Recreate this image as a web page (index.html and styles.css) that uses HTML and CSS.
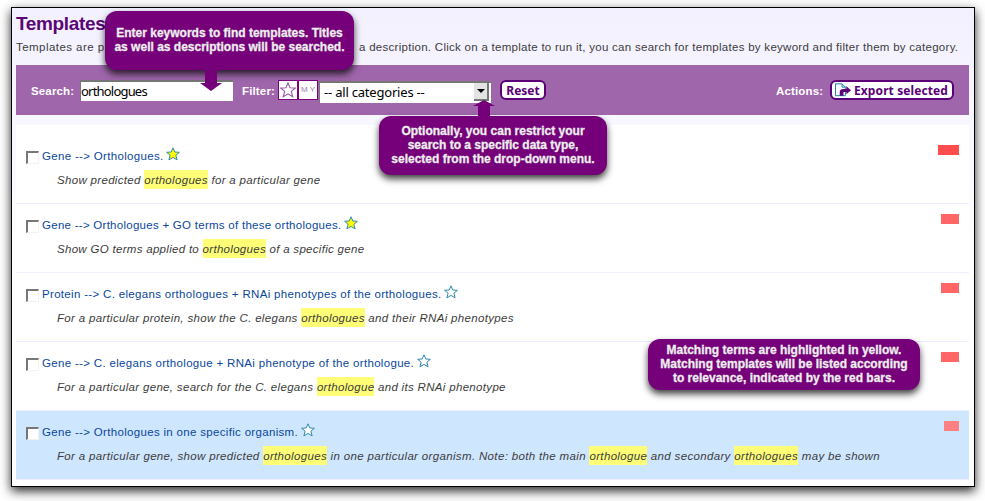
FILE: index.html
```
<!DOCTYPE html>
<html lang="en">
<head>
<meta charset="utf-8">
<title>Templates</title>
<link rel="stylesheet" href="styles.css">
</head>
<body>
<svg class="defs" width="0" height="0" aria-hidden="true">
  <symbol id="star" viewBox="0 0 14 14"><path d="M7 .8 8.8 5 13.4 5.3 9.9 8.2 11.1 12.9 7 10.4 2.9 12.9 4.1 8.2 .6 5.3 5.2 5Z"/></symbol>
</svg>
<main class="window">
  <h1>Templates</h1>
  <p class="intro"><span class="intro-start">Templates are p</span><span class="intro-end">a description. Click on a template to run it, you can search for templates by keyword and filter them by category.</span></p>

  <div class="toolbar">
    <label class="label-search" for="q">Search:</label>
    <input id="q" class="search" type="text" value="orthologues">
    <span class="label-filter">Filter:</span>
    <span class="toggle"><svg class="toggle-star"><use href="#star"/></svg></span><span class="toggle my">MY</span>
    <div class="select"><span>-- all categories --</span><span class="drop"><svg width="8" height="4"><path d="M0 0H8L4 4Z"/></svg></span></div>
    <button class="button reset">Reset</button>
    <span class="label-actions">Actions:</span>
    <button class="button export"><svg width="17" height="14" viewBox="0 0 18 14"><path class="page" d="M.5 .5H7.5L11 4V13H.5ZM7.5 .5V4H11"/><path class="arrow" d="M5 13V9.5Q5 6 9 6H12V3L17 7.3 12 11.5V9H9V13Z"/></svg><span>Export selected</span></button>
  </div>

  <section class="list">
    <article class="row">
      <div class="title"><i class="check"></i><a>Gene --&gt; Orthologues.</a><svg class="star on"><use href="#star"/></svg><b class="bar best"></b></div>
      <p>Show predicted <mark>orthologues</mark> for a particular gene</p>
    </article>
    <article class="row">
      <div class="title"><i class="check"></i><a>Gene --&gt; Orthologues + GO terms of these orthologues.</a><svg class="star on"><use href="#star"/></svg><b class="bar"></b></div>
      <p>Show GO terms applied to <mark>orthologues</mark> of a specific gene</p>
    </article>
    <article class="row">
      <div class="title"><i class="check"></i><a>Protein --&gt; C. elegans orthologues + RNAi phenotypes of the orthologues.</a><svg class="star"><use href="#star"/></svg><b class="bar"></b></div>
      <p>For a particular protein, show the C. elegans <mark>orthologues</mark> and their RNAi phenotypes</p>
    </article>
    <article class="row">
      <div class="title"><i class="check"></i><a>Gene --&gt; C. elegans orthologue + RNAi phenotype of the orthologue.</a><svg class="star"><use href="#star"/></svg><b class="bar"></b></div>
      <p>For a particular gene, search for the C. elegans <mark>orthologue</mark> and its RNAi phenotype</p>
    </article>
    <article class="row hover">
      <div class="title"><i class="check"></i><a>Gene --&gt; Orthologues in one specific organism.</a><svg class="star"><use href="#star"/></svg><b class="bar low"></b></div>
      <p>For a particular gene, show predicted <mark>orthologues</mark> in one particular organism. Note: both the main <mark>orthologue</mark> and secondary <mark>orthologues</mark> may be shown</p>
    </article>
  </section>
</main>

<aside class="tip tip-search">Enter keywords to find templates. Titles<br>as well as descriptions will be searched.<svg class="down" width="22" height="23"><path d="M5 0H17V14H22L11 22 0 14H5Z"/></svg></aside>
<aside class="tip tip-filter">Optionally, you can restrict your<br>search to a specific data type,<br>selected from the drop-down menu.<svg class="up" width="22" height="17"><path d="M5 17V6H0L11 0 22 6H17V17Z"/></svg></aside>
<aside class="tip tip-match">Matching terms are highlighted in yellow.<br>Matching templates will be listed according<br>to relevance, indicated by the red bars.</aside>
</body>
</html>
```
FILE: styles.css
```
* { box-sizing: border-box; }
body { margin: 0; width: 985px; height: 501px; overflow: hidden; background: #fff; position: relative; font: 11.5px/19px "Liberation Sans", Arial, sans-serif; color: #3c3c3c; }
.defs { position: absolute; }
.window { margin: 7px 0 0 11px; width: 964px; height: 480px; border: 1px solid #000; padding: 0 5px 0 4px; background: linear-gradient(#f3f0ff, #fff 250px); box-shadow: 0 4px 10px rgba(0,0,0,.85); display: flow-root; }
h1 { margin: 5px 0 0; font-size: 19px; line-height: 22px; letter-spacing: -.35px; color: #5b0577; white-space: nowrap; }
p { margin: 0; white-space: nowrap; }
.intro { display: flex; margin-top: 3px; height: 22px; letter-spacing: .28px; }
.intro-start { width: 343px; flex: none; letter-spacing: .45px; }
.toolbar { margin-top: 5px; height: 50px; background: #9f66ab; display: flex; align-items: flex-start; padding: 15px 15px 0 15px; color: #fff; font-weight: bold; letter-spacing: .15px; }
.toolbar > * { flex: none; }
.label-search { width: 49px; line-height: 22px; }
.search { width: 153px; height: 21px; border: 0; border-top: 2px solid #777; border-left: 1px solid #777; padding: 0 0 2px; font: 13px/17px "Noto Sans", sans-serif; color: #000; background: #fff; border-radius: 0; outline: 0; letter-spacing: -.8px; }
.label-filter { margin-left: 9px; width: 36px; line-height: 22px; }
.toggle { width: 20px; height: 20px; border: 1px solid #800080; background: #fff; display: grid; place-items: center; }
.toggle-star { width: 16px; height: 16px; fill: #fff; stroke: #9a5cad; stroke-width: 1; }
.my { color: #9b80aa; font-size: 8px; font-weight: normal; line-height: 18px; letter-spacing: 2px; padding-left: 2px; }
.select { margin: 1px 0 0 1px; width: 172px; height: 22px; background: #fff; border-top: 2px solid #777; border-left: 1px solid #777; display: flex; justify-content: space-between; padding: 0 2px 2px 4px; font: 13px/19px "Noto Sans", sans-serif; color: #000; letter-spacing: -.2px; }
.drop { width: 15px; height: 18px; background: #e3e3e3; border-right: 2px solid #777; border-bottom: 2px solid #777; display: grid; place-items: center; }
.button { height: 20px; border: 2px solid #5b0077; border-radius: 6px; background: #fff; color: #5b0077; font: bold 12px/15px "Noto Sans", sans-serif; padding: 0; }
.reset { width: 46px; margin-left: 9px; }
.label-actions { margin-left: auto; width: 54px; line-height: 22px; }
.export { width: 124px; display: flex; align-items: center; padding-left: 3px; gap: 2px; white-space: nowrap; letter-spacing: .1px; }
.page { fill: #fff; stroke: #147aa0; }
.arrow { fill: #5b0077; }
.list { margin-top: 10px; padding-top: 10px; background: #fff; height: 355px; }
.row { height: 69px; border-bottom: 1px solid #efedff; padding: 9px 10px 0; }
.hover { background: #cfe6ff; }
.title { display: flex; height: 26px; align-items: flex-start; letter-spacing: .32px; }
.title a { color: #0a479c; line-height: 24px; margin-left: 3px; white-space: nowrap; }
.row:nth-child(2) .title { letter-spacing: .27px; }
.check { width: 13px; height: 13px; margin-top: 7px; background: #fff; border: 1px solid #f2f2f2; border-top: 2px solid #777; border-left: 2px solid #777; flex: none; }
.star { width: 14px; height: 14px; margin: 3px 0 0 2.5px; fill: #fff; stroke: #318aaa; stroke-width: 1; flex: none; }
.on { fill: #ff0; }
.bar { width: 18px; height: 10px; margin: 1px 0 0 auto; background: #f66; }
.best { width: 21px; background: #ff4d4d; }
.low { width: 15px; background: #ff8080; }
.row p { margin-left: 31px; font-style: italic; letter-spacing: .32px; line-height: 21px; }
.row:nth-child(2) p { letter-spacing: .3px; }
.row.hover p { letter-spacing: .345px; }
mark { display: inline-block; height: 19px; line-height: 21px; vertical-align: top; background: #ff7; color: inherit; }
.tip { position: absolute; background: #750079; color: #eee; border-radius: 12px; box-shadow: 0 4px 7px rgba(0,0,0,.75); font: bold 12px/14px "Liberation Sans", Arial, sans-serif; text-align: center; white-space: nowrap; -webkit-text-stroke: .3px #eee; }
.tip svg { position: absolute; fill: #750079; }
.tip-search { left: 105px; top: 11px; width: 249px; height: 59px; padding-top: 15px; }
.down { left: 95px; top: 58px; }
.tip-filter { left: 379px; top: 116px; width: 228px; height: 59px; padding-top: 8px; }
.up { left: 94px; top: -16px; }
.tip-match { left: 648px; top: 339px; width: 272px; height: 51px; padding-top: 4px; }
```
